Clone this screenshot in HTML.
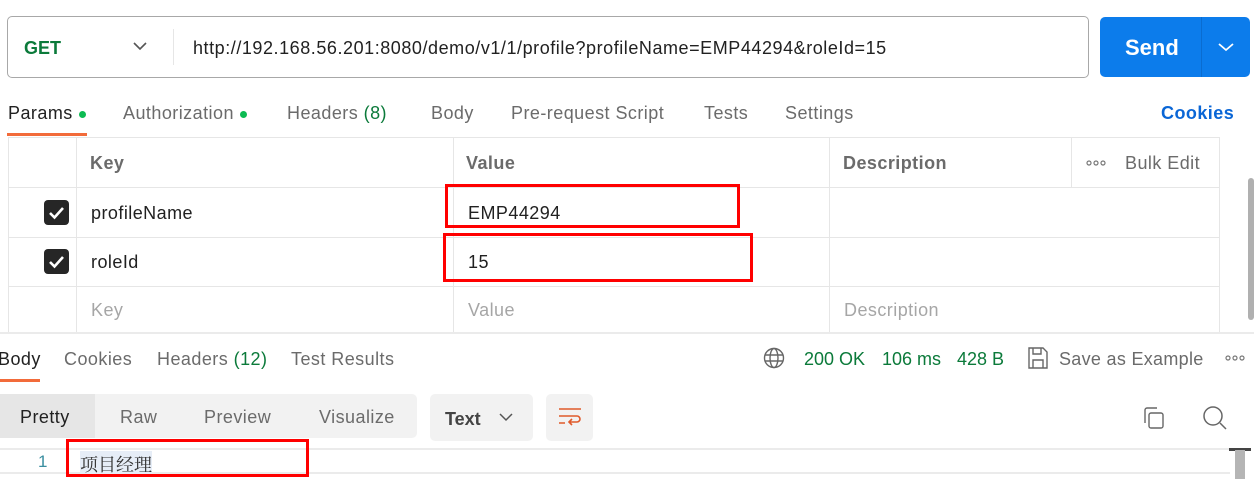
<!DOCTYPE html>
<html><head><meta charset="utf-8"><style>
body{margin:0;width:1254px;height:479px;overflow:hidden;background:#fff;font-family:"Liberation Sans",sans-serif;position:relative;color:#212121}
.a{position:absolute;white-space:nowrap}
.g{color:#6b6b6b}
.t{font-size:18px;letter-spacing:0.45px}
.red{position:absolute;border:3px solid #f00;box-sizing:border-box}
.vl{position:absolute;width:1px;background:#e6e6e6}
.hl{position:absolute;height:1px;background:#e6e6e6}
.cb{position:absolute;width:25px;height:25px;background:#262626;border-radius:4px}
.dot{display:inline-block;width:7px;height:7px;border-radius:50%;background:#0cbb52;margin-left:6px;vertical-align:middle}
</style></head><body>
<div class="a" style="left:7px;top:16px;width:1080px;height:60px;border:1px solid #a8a8a8;border-radius:5px"></div>
<div class="a" style="left:24px;top:38px;font-size:18px;font-weight:bold;color:#0b7a3a">GET</div>
<svg class="a" style="left:133px;top:41px" width="14" height="10"><path d="M1 2l6 6 6-6" fill="none" stroke="#555" stroke-width="1.6"/></svg>
<div class="vl" style="left:173px;top:29px;height:36px"></div>
<div class="a" style="left:193px;top:38px;font-size:18px;letter-spacing:0.55px">http://192.168.56.201:8080/demo/v1/1/profile?profileName=EMP44294&amp;roleId=15</div>
<div class="a" style="left:1100px;top:17px;width:150px;height:60px;background:#0c7ceb;border-radius:5px"></div>
<div class="a" style="left:1201px;top:17px;width:1px;height:60px;background:#0a6cd0"></div>
<div class="a" style="left:1125px;top:35px;font-size:22px;font-weight:bold;color:#fff">Send</div>
<svg class="a" style="left:1218px;top:42px" width="16" height="10"><path d="M1 2l7 6 7-6" fill="none" stroke="#fff" stroke-width="1.8"/></svg>

<div class="a t" style="left:8px;top:103px">Params<span class="dot"></span></div>
<div class="a" style="left:7px;top:133px;width:80px;height:3px;background:#f26b3a"></div>
<div class="a t g" style="left:123px;top:103px">Authorization<span class="dot"></span></div>
<div class="a t g" style="left:287px;top:103px">Headers <span style="color:#0b7a3a">(8)</span></div>
<div class="a t g" style="left:431px;top:103px">Body</div>
<div class="a t g" style="left:511px;top:103px">Pre-request Script</div>
<div class="a t g" style="left:704px;top:103px">Tests</div>
<div class="a t g" style="left:785px;top:103px">Settings</div>
<div class="a t" style="left:1161px;top:103px;color:#0a66d6;font-weight:bold">Cookies</div>

<div class="hl" style="left:8px;top:137px;width:1211px"></div>
<div class="hl" style="left:8px;top:187px;width:1211px"></div>
<div class="hl" style="left:8px;top:237px;width:1211px"></div>
<div class="hl" style="left:8px;top:286px;width:1211px"></div>
<div class="vl" style="left:8px;top:137px;height:196px"></div>
<div class="vl" style="left:76px;top:137px;height:196px"></div>
<div class="vl" style="left:453px;top:137px;height:196px"></div>
<div class="vl" style="left:829px;top:137px;height:196px"></div>
<div class="vl" style="left:1071px;top:137px;height:50px"></div>
<div class="vl" style="left:1219px;top:137px;height:196px"></div>
<div class="a" style="left:0;top:332px;width:1254px;height:2px;background:#ebebeb"></div>
<div class="a" style="left:1248px;top:178px;width:6px;height:142px;background:#b0b0b0;border-radius:3px"></div>

<div class="a t g" style="left:90px;top:153px;font-weight:bold">Key</div>
<div class="a t g" style="left:466px;top:153px;font-weight:bold">Value</div>
<div class="a t g" style="left:843px;top:153px;font-weight:bold">Description</div>
<svg class="a" style="left:1086px;top:160px" width="20" height="6" fill="none" stroke="#777" stroke-width="1.2"><circle cx="3" cy="3" r="2"/><circle cx="10" cy="3" r="2"/><circle cx="17" cy="3" r="2"/></svg>
<div class="a t g" style="left:1125px;top:153px">Bulk Edit</div>

<div class="cb" style="left:44px;top:200px"></div>
<svg class="a" style="left:44px;top:200px" width="25" height="25"><path d="M6 13l4.5 4.5L19 8" fill="none" stroke="#fff" stroke-width="2.6"/></svg>
<div class="cb" style="left:44px;top:249px"></div>
<svg class="a" style="left:44px;top:249px" width="25" height="25"><path d="M6 13l4.5 4.5L19 8" fill="none" stroke="#fff" stroke-width="2.6"/></svg>
<div class="a t" style="left:91px;top:203px">profileName</div>
<div class="a t" style="left:91px;top:252px">roleId</div>
<div class="a t" style="left:468px;top:203px">EMP44294</div>
<div class="a t" style="left:468px;top:252px">15</div>
<div class="a t" style="left:91px;top:300px;color:#a6a6a6">Key</div>
<div class="a t" style="left:468px;top:300px;color:#a6a6a6">Value</div>
<div class="a t" style="left:844px;top:300px;color:#a6a6a6">Description</div>

<div class="red" style="left:445px;top:184px;width:295px;height:44px"></div>
<div class="red" style="left:443px;top:233px;width:310px;height:49px"></div>

<div class="a t" style="left:-2px;top:349px">Body</div>
<div class="a" style="left:0;top:379px;width:40px;height:3px;background:#f26b3a"></div>
<div class="a t g" style="left:64px;top:349px">Cookies</div>
<div class="a t g" style="left:157px;top:349px">Headers <span style="color:#0b7a3a">(12)</span></div>
<div class="a t g" style="left:291px;top:349px">Test Results</div>
<svg class="a" style="left:763px;top:347px" width="22" height="22" fill="none" stroke="#666" stroke-width="1.4"><circle cx="11" cy="11" r="9.5"/><ellipse cx="11" cy="11" rx="4" ry="9.5"/><path d="M2 8h18M2 14h18"/></svg>
<div class="a t" style="left:804px;top:349px;color:#0b7a3a;letter-spacing:0">200 OK</div>
<div class="a t" style="left:882px;top:349px;color:#0b7a3a;letter-spacing:0">106 ms</div>
<div class="a t" style="left:957px;top:349px;color:#0b7a3a;letter-spacing:0">428 B</div>
<svg class="a" style="left:1027px;top:346px" width="22" height="24" fill="none" stroke="#666" stroke-width="1.4"><path d="M2 2h14l4 4v16H2z"/><path d="M6 2v6h8V2M6 22v-8h10v8"/></svg>
<div class="a t g" style="left:1059px;top:349px;letter-spacing:0.3px">Save as Example</div>
<svg class="a" style="left:1225px;top:355px" width="20" height="6" fill="none" stroke="#777" stroke-width="1.2"><circle cx="3" cy="3" r="2"/><circle cx="10" cy="3" r="2"/><circle cx="17" cy="3" r="2"/></svg>

<div class="a" style="left:0;top:394px;width:417px;height:44px;background:#f2f2f2;border-radius:0 5px 5px 0"></div>
<div class="a" style="left:0;top:394px;width:95px;height:44px;background:#e6e6e6"></div>
<div class="a t" style="left:20px;top:407px">Pretty</div>
<div class="a t g" style="left:120px;top:407px">Raw</div>
<div class="a t g" style="left:204px;top:407px">Preview</div>
<div class="a t g" style="left:319px;top:407px">Visualize</div>
<div class="a" style="left:430px;top:394px;width:103px;height:47px;background:#f2f2f2;border-radius:5px"></div>
<div class="a t" style="left:445px;top:409px;font-weight:bold;color:#444;letter-spacing:0">Text</div>
<svg class="a" style="left:499px;top:413px" width="14" height="9"><path d="M1 1l6 6 6-6" fill="none" stroke="#555" stroke-width="1.5"/></svg>
<div class="a" style="left:546px;top:394px;width:47px;height:47px;background:#f2f2f2;border-radius:5px"></div>
<svg class="a" style="left:557px;top:406px" width="26" height="22" fill="none" stroke="#e05a2b" stroke-width="1.6"><path d="M2 3h22M2 10h18a3 3 0 0 1 0 6h-8M15 13l-3 3 3 3M2 17h6"/></svg>
<svg class="a" style="left:1143px;top:406px" width="22" height="24" fill="none" stroke="#666" stroke-width="1.4"><rect x="6" y="7" width="14" height="15" rx="2"/><path d="M2 17V4a2 2 0 0 1 2-2h10"/></svg>
<svg class="a" style="left:1202px;top:405px" width="26" height="26" fill="none" stroke="#666" stroke-width="1.5"><circle cx="11" cy="11" r="9"/><path d="M18 18l6 6"/></svg>

<div class="a" style="left:0;top:448px;width:1230px;height:2px;background:#ebebeb"></div>
<div class="a" style="left:0;top:472px;width:1230px;height:2px;background:#ebebeb"></div>
<div class="a" style="left:1229px;top:448px;width:22px;height:3px;background:#444"></div>
<div class="a" style="left:1235px;top:450px;width:10px;height:29px;background:#b5b5b5"></div>
<div class="a" style="left:38px;top:452px;font-size:17px;color:#3a8ea0">1</div>
<div class="a" style="left:80px;top:451px;font-size:18px;font-family:'Liberation Serif','Noto Serif CJK SC',serif;background:#e6edf7;color:#333">项目经理</div>
<div class="red" style="left:66px;top:439px;width:243px;height:38px"></div>
</body></html>
